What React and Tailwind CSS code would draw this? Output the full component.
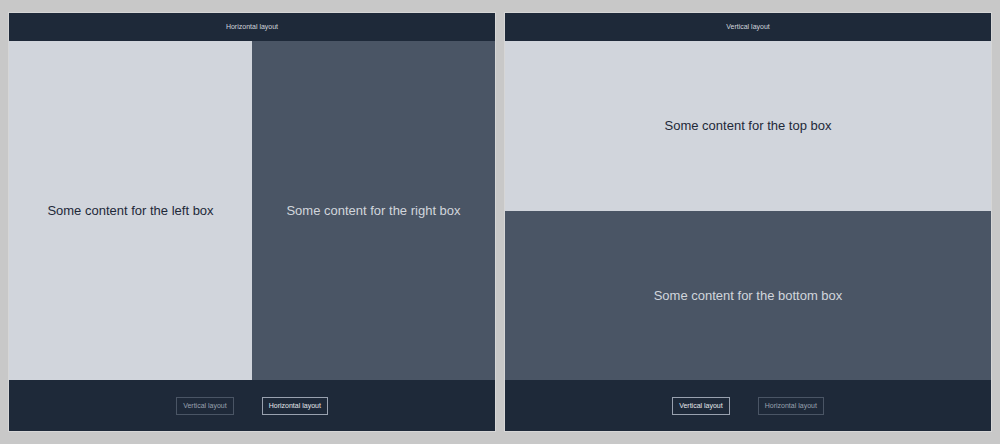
import { useState } from "react";

const FONT = { fontFamily: '"Liberation Sans", Arial, sans-serif' };

function Footer({ mode, setMode }) {
  const btn = (active) =>
    active
      ? "h-[18px] px-[6px] border border-gray-400 text-gray-200 text-[7px] leading-none"
      : "h-[18px] px-[6px] border border-gray-600 text-gray-400 text-[7px] leading-none";
  return (
    <div className="h-[51px] shrink-0 bg-gray-800 flex items-center justify-center gap-[28px]">
      <button className={btn(mode === "vertical")} onClick={() => setMode("vertical")}>
        Vertical layout
      </button>
      <button className={btn(mode === "horizontal")} onClick={() => setMode("horizontal")}>
        Horizontal layout
      </button>
    </div>
  );
}

function Panel({ initial }) {
  const [mode, setMode] = useState(initial);
  const horizontal = mode === "horizontal";
  return (
    <div className="w-[488px] h-[420px] flex flex-col border border-[#d6d6d6] overflow-hidden">
      <div className="h-[28px] shrink-0 bg-gray-800 flex items-center justify-center text-[7px] text-gray-300">
        {horizontal ? "Horizontal layout" : "Vertical layout"}
      </div>
      <div className={horizontal ? "flex-1 flex" : "flex-1 flex flex-col"}>
        <div className="flex-1 bg-gray-300 flex items-center justify-center text-[13px] text-gray-800">
          {horizontal ? "Some content for the left box" : "Some content for the top box"}
        </div>
        <div className="flex-1 bg-gray-600 flex items-center justify-center text-[13px] text-gray-300">
          {horizontal ? "Some content for the right box" : "Some content for the bottom box"}
        </div>
      </div>
      <Footer mode={mode} setMode={setMode} />
    </div>
  );
}

export default function App() {
  return (
    <div style={FONT} className="w-[1000px] h-[444px] bg-[#c8c8c8] flex items-center justify-center gap-[8px]">
      <Panel initial="horizontal" />
      <Panel initial="vertical" />
    </div>
  );
}
